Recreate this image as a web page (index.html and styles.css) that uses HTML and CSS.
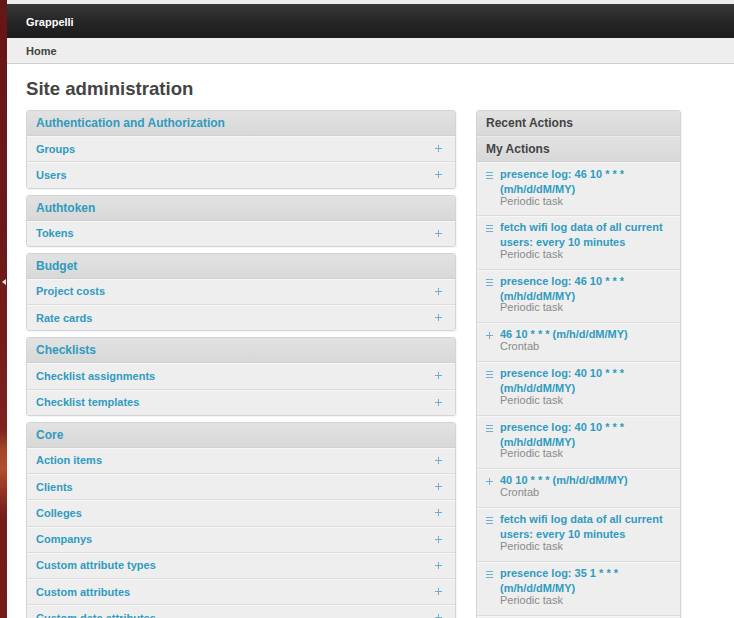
FILE: index.html
```html
<!DOCTYPE html>
<html>
<head>
<meta charset="utf-8">
<title>Site administration | Grappelli</title>
<link rel="stylesheet" href="styles.css">
</head>
<body>
<div class="desk">
  <div class="strip"><span class="strip-arrow"></span></div>
  <div class="page">
    <div class="topbar"><span class="brand">Grappelli</span></div>
    <div class="crumbs"><span>Home</span></div>
    <div class="content">
      <h1 class="title">Site administration</h1>
      <div class="cols">
        <div class="apps">
          <div class="module">
            <h2 class="mod-head">Authentication and Authorization</h2>
            <div class="row"><a class="row-link">Groups</a><span class="plus"></span></div>
            <div class="row"><a class="row-link">Users</a><span class="plus"></span></div>
          </div>
          <div class="module">
            <h2 class="mod-head">Authtoken</h2>
            <div class="row"><a class="row-link">Tokens</a><span class="plus"></span></div>
          </div>
          <div class="module">
            <h2 class="mod-head">Budget</h2>
            <div class="row"><a class="row-link">Project costs</a><span class="plus"></span></div>
            <div class="row"><a class="row-link">Rate cards</a><span class="plus"></span></div>
          </div>
          <div class="module">
            <h2 class="mod-head">Checklists</h2>
            <div class="row"><a class="row-link">Checklist assignments</a><span class="plus"></span></div>
            <div class="row"><a class="row-link">Checklist templates</a><span class="plus"></span></div>
          </div>
          <div class="module">
            <h2 class="mod-head">Core</h2>
            <div class="row"><a class="row-link">Action items</a><span class="plus"></span></div>
            <div class="row"><a class="row-link">Clients</a><span class="plus"></span></div>
            <div class="row"><a class="row-link">Colleges</a><span class="plus"></span></div>
            <div class="row"><a class="row-link">Companys</a><span class="plus"></span></div>
            <div class="row"><a class="row-link">Custom attribute types</a><span class="plus"></span></div>
            <div class="row"><a class="row-link">Custom attributes</a><span class="plus"></span></div>
            <div class="row"><a class="row-link">Custom date attributes</a><span class="plus"></span></div>
          </div>
        </div>
        <div class="side">
          <div class="module">
            <h2 class="side-head">Recent Actions</h2>
            <h3 class="side-sub">My Actions</h3>
            <div class="act"><span class="ico ico-change"></span><div class="act-body"><a class="act-link">presence log: 46 10 * * * (m/h/d/dM/MY)</a><span class="act-type">Periodic task</span></div></div>
            <div class="act"><span class="ico ico-change"></span><div class="act-body"><a class="act-link">fetch wifi log data of all current users: every 10 minutes</a><span class="act-type">Periodic task</span></div></div>
            <div class="act"><span class="ico ico-change"></span><div class="act-body"><a class="act-link">presence log: 46 10 * * * (m/h/d/dM/MY)</a><span class="act-type">Periodic task</span></div></div>
            <div class="act"><span class="ico ico-add"></span><div class="act-body"><a class="act-link">46 10 * * * (m/h/d/dM/MY)</a><span class="act-type">Crontab</span></div></div>
            <div class="act"><span class="ico ico-change"></span><div class="act-body"><a class="act-link">presence log: 40 10 * * * (m/h/d/dM/MY)</a><span class="act-type">Periodic task</span></div></div>
            <div class="act"><span class="ico ico-change"></span><div class="act-body"><a class="act-link">presence log: 40 10 * * * (m/h/d/dM/MY)</a><span class="act-type">Periodic task</span></div></div>
            <div class="act"><span class="ico ico-add"></span><div class="act-body"><a class="act-link">40 10 * * * (m/h/d/dM/MY)</a><span class="act-type">Crontab</span></div></div>
            <div class="act"><span class="ico ico-change"></span><div class="act-body"><a class="act-link">fetch wifi log data of all current users: every 10 minutes</a><span class="act-type">Periodic task</span></div></div>
            <div class="act"><span class="ico ico-change"></span><div class="act-body"><a class="act-link">presence log: 35 1 * * * (m/h/d/dM/MY)</a><span class="act-type">Periodic task</span></div></div>
            <div class="act act-tail"></div>
          </div>
        </div>
      </div>
    </div>
  </div>
</div>
</body>
</html>
```

FILE: styles.css
```css
html, body {
  margin: 0;
  padding: 0;
  height: 100%;
  overflow: hidden;
  background: #fff;
}
body {
  font-family: "Liberation Sans", Arial, sans-serif;
  color: #444;
}
.desk {
  display: flex;
  min-height: 100%;
}
.strip {
  width: 7px;
  flex: none;
  position: relative;
  background: linear-gradient(180deg, #651616 0%, #6f1a1a 40%, #781e1c 58%, #7e221d 66%, #a5442a 69%, #b24e2c 72%, #8e3022 76%, #761d1b 79%, #701b1b 100%);
}
.strip-arrow {
  position: absolute;
  top: 279px;
  left: 2px;
  width: 0;
  height: 0;
  border-top: 3px solid transparent;
  border-bottom: 3px solid transparent;
  border-right: 4px solid #e8e0e0;
}
.page {
  flex: 1;
  min-width: 0;
}
.topbar {
  border-top: 4px solid #ececec;
  height: 34px;
  background: linear-gradient(180deg, #383838 0%, #262626 50%, #1c1c1c 100%);
  display: flex;
  align-items: center;
  padding-left: 19px;
}
.brand {
  color: #fff;
  font-size: 11px;
  font-weight: bold;
  position: relative;
  top: 1px;
}
.crumbs {
  height: 25px;
  background: #eeeeee;
  border-bottom: 1px solid #cfcfcf;
  display: flex;
  align-items: center;
  padding-left: 19px;
  font-size: 11px;
  font-weight: bold;
  color: #444;
}
.content {
  padding: 0 0 0 19px;
}
.title {
  margin: 13px 0 10px;
  font-size: 18.6px;
  line-height: 23px;
  font-weight: bold;
  color: #444;
}
.cols {
  display: grid;
  grid-template-columns: 430px 205px;
  column-gap: 20px;
  align-items: start;
}
.apps {
  display: flex;
  flex-direction: column;
  gap: 6px;
}
.module {
  border: 1px solid #d4d4d4;
  border-radius: 3px;
  background: #eeeeee;
  box-shadow: 1px 1px 0 rgba(0,0,0,0.04);
  overflow: hidden;
}
.mod-head,
.side-head,
.side-sub {
  margin: 0;
  height: 24px;
  line-height: 25px;
  padding: 0 10px 0 9px;
  font-size: 12px;
  font-weight: bold;
  background: linear-gradient(180deg, #e2e2e2 0%, #d8d8d8 100%);
  border-bottom: 1px solid #d0d0d0;
}
.mod-head {
  color: #309bbf;
}
.side-head,
.side-sub {
  color: #444;
}
.side-sub {
  height: 25px;
  line-height: 26px;
  box-shadow: inset 0 1px 0 #ececec;
}
.row {
  height: 25.25px;
  display: flex;
  align-items: center;
  justify-content: space-between;
  padding: 0 13px 0 9px;
  border-bottom: 1px solid #dcdcdc;
  box-shadow: inset 0 1px 0 #f7f7f7;
  background: #eeeeee;
}
.row:last-child {
  border-bottom: none;
}
.row-link {
  font-size: 11px;
  font-weight: bold;
  color: #309bbf;
  text-decoration: none;
}
.plus {
  width: 7px;
  height: 7px;
  position: relative;
}
.plus::before,
.plus::after {
  content: "";
  position: absolute;
  background: #6ab3cc;
}
.plus::before {
  left: 3px;
  top: 0;
  width: 1px;
  height: 7px;
}
.plus::after {
  left: 0;
  top: 3px;
  width: 7px;
  height: 1px;
}
.act {
  display: flex;
  padding: 4px 10px 9px 9px;
  border-bottom: 1px solid #dcdcdc;
  box-shadow: inset 0 1px 0 #f7f7f7;
}
.act:first-of-type {
  padding-top: 5px;
  padding-bottom: 8px;
}
.act-tail {
  height: 20px;
}
.ico {
  flex: none;
  width: 7px;
  height: 7px;
  margin: 5px 7px 0 0;
  position: relative;
}
.ico-change {
  height: 7px;
  background: linear-gradient(180deg, #6ab3cc 0 1px, transparent 1px 3px, #6ab3cc 3px 4px, transparent 4px 6px, #6ab3cc 6px 7px);
}
.ico-add::before,
.ico-add::after {
  content: "";
  position: absolute;
  background: #6ab3cc;
}
.ico-add::before {
  left: 3px;
  top: 0;
  width: 1px;
  height: 7px;
}
.ico-add::after {
  left: 0;
  top: 3px;
  width: 7px;
  height: 1px;
}
.act-body {
  display: flex;
  flex-direction: column;
  min-width: 0;
}
.act-link {
  font-size: 11px;
  font-weight: bold;
  line-height: 15.4px;
  color: #309bbf;
  text-decoration: none;
}
.act-type {
  font-size: 11px;
  line-height: 11px;
  margin-top: -2px;
  color: #8a8a8a;
}
```
